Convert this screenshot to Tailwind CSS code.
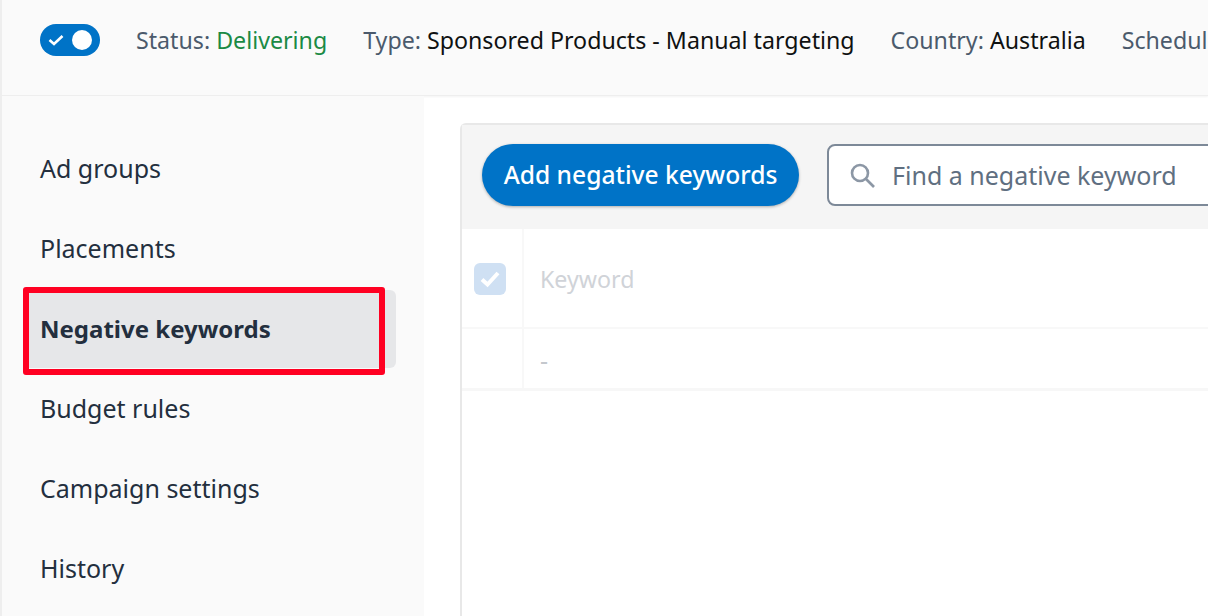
<!DOCTYPE html>
<html lang="en">
<head>
  <meta charset="UTF-8" />
  <title>Negative keywords</title>
  <script src="https://cdn.jsdelivr.net/npm/@tailwindcss/browser@4"></script>
</head>
<body class="bg-white h-[616px] w-[1208px] overflow-hidden font-['Noto_Sans',sans-serif] text-[25px] text-[#232f3e]">

  <!-- Status bar -->
  <header class="h-[96px] pl-[40px] bg-[#fafafa] border-l-2 border-b border-[#eeeeee] shadow-[0_1px_2px_rgba(0,0,0,0.05)] flex items-center whitespace-nowrap overflow-hidden">
    <div class="-ml-[2px] w-[60px] h-[32px] rounded-full bg-[#0073c7] flex items-center justify-between pl-[8px] pr-[8px] shrink-0 -mt-[15px]">
      <svg width="16" height="12" viewBox="0 0 16 12" fill="none"><path d="M1.5 6 L6 10 L14.5 2" stroke="white" stroke-width="2.6"/></svg>
      <span class="w-[20px] h-[20px] rounded-full bg-white"></span>
    </div>
    <div class="flex gap-[36px] ml-[36px] -mt-[15px] text-[23.2px] text-[#4b5a6c]">
      <span>Status: <span class="text-[#1b8a45]">Delivering</span></span>
      <span>Type: <span class="text-[#0f1111]">Sponsored Products - Manual targeting</span></span>
      <span>Country: <span class="text-[#0f1111]">Australia</span></span>
      <span>Schedule</span>
    </div>
  </header>

  <div class="flex h-[520px] overflow-hidden">
    <!-- Sidebar -->
    <nav class="w-[424px] h-full bg-[#fafafa] border-l-2 border-[#eeeeee] shrink-0 pt-[34px] pl-[22px] relative">
      <a class="flex items-center h-[78px] mb-[2px] pl-[16px] w-[372px] rounded-[6px]">Ad groups</a>
      <a class="flex items-center h-[78px] mb-[2px] pl-[16px] w-[372px] rounded-[6px]">Placements</a>
      <a class="flex items-center h-[78px] mb-[2px] pl-[16px] w-[372px] rounded-[6px] bg-[#e6e7e9] font-bold text-[24px]">Negative keywords</a>
      <a class="flex items-center h-[78px] mb-[2px] pl-[16px] w-[372px] rounded-[6px]">Budget rules</a>
      <a class="flex items-center h-[78px] mb-[2px] pl-[16px] w-[372px] rounded-[6px]">Campaign settings</a>
      <a class="flex items-center h-[78px] mb-[2px] pl-[16px] w-[372px] rounded-[6px]">History</a>
      <!-- Red annotation -->
      <div class="absolute left-[21px] top-[191px] w-[362px] h-[88px] border-[6px] border-[#ff0022] rounded-[3px]"></div>
    </nav>

    <!-- Table panel -->
    <main class="flex-1 pl-[36px] pt-[27px] min-w-0 overflow-hidden">
      <div class="w-[800px] h-[493px] border-l-2 border-t-2 border-[#e8e8e8] rounded-tl-[6px]">
        <div class="h-[104px] bg-[#f5f5f5] flex items-center gap-[28px] pl-[20px] pb-[4px]">
          <button class="h-[62px] w-[317px] rounded-full bg-[#0073c7] text-white text-[24.6px] font-medium shadow-[0_1px_3px_rgba(0,0,0,0.3)] shrink-0">Add negative keywords</button>
          <div class="h-[62px] flex-1 bg-white border-2 border-[#7d8998] rounded-l-[8px] flex items-center pl-[20px] gap-[16px] text-[#5f6f81]">
            <svg width="27" height="27" viewBox="0 0 27 27" fill="none" stroke="#8c97a5" stroke-width="2.6"><circle cx="11" cy="11" r="8"/><path d="M17 17 L25 25"/></svg>
            <span class="pt-[1px]">Find a negative keyword</span>
          </div>
        </div>
        <!-- Disabled table -->
        <div class="flex h-[100px] items-center border-b-2 border-[#f8f8f8]">
          <div class="w-[62px] h-full border-r-2 border-[#f8f8f8] flex items-center pl-[12px] pt-[2px] shrink-0">
            <span class="w-[32px] h-[32px] rounded-[6px] bg-[#cfe0f3] flex items-center justify-center">
              <svg width="22" height="18" viewBox="0 0 22 18" fill="none"><path d="M3 9.5 L8.5 14.5 L19 3" stroke="white" stroke-width="4"/></svg>
            </span>
          </div>
          <span class="pl-[16px] pt-[3px] text-[23.2px] text-[#d0d3d8]">Keyword</span>
        </div>
        <div class="flex h-[62px] items-center border-b-[3px] border-[#f7f7f7]">
          <div class="w-[62px] h-full border-r-2 border-[#f8f8f8] shrink-0"></div>
          <span class="pl-[16px] pt-[4px] text-[#c4c8cd]">-</span>
        </div>
      </div>
    </main>
  </div>
</body>
</html>
